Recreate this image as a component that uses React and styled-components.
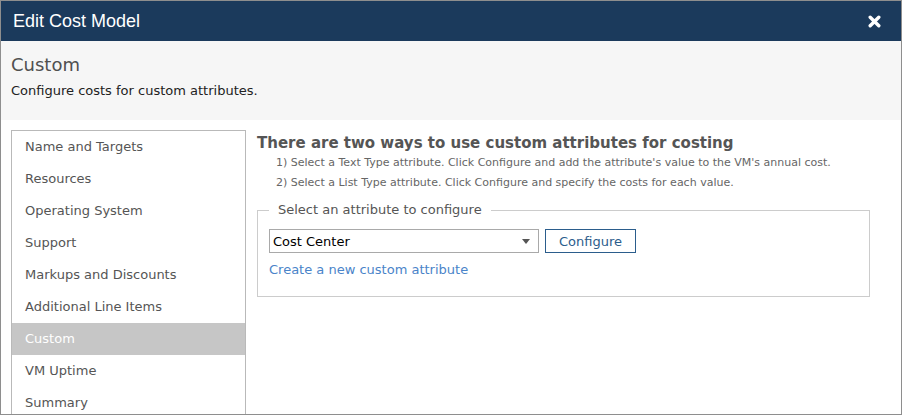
import React from "react";
import styled, { createGlobalStyle } from "styled-components";

const Global = createGlobalStyle`
  html, body { margin: 0; padding: 0; background: #fff; }
  * { box-sizing: border-box; }
`;

const Window = styled.div`
  width: 902px;
  height: 415px;
  border: 1px solid #8e8e8e;
  overflow: hidden;
  display: flex;
  flex-direction: column;
  font-family: "DejaVu Sans", Verdana, sans-serif;
  background: #fff;
`;

const TitleBar = styled.div`
  height: 40px;
  flex: none;
  background: #1b3a5c;
  display: flex;
  align-items: center;
  justify-content: space-between;
  padding: 0 20px 0 12px;
`;

const Title = styled.div`
  font-family: "Liberation Sans", Arial, sans-serif;
  font-size: 18px;
  color: #fff;
`;

const CloseButton = styled.div`
  width: 13px;
  height: 13px;
  display: flex;
  cursor: pointer;
`;

const SubHeader = styled.div`
  height: 79px;
  flex: none;
  background: #f6f6f6;
  padding: 12px 10px 0 10px;
`;

const SubTitle = styled.div`
  font-size: 18px;
  color: #505050;
  line-height: 24px;
`;

const SubText = styled.div`
  font-size: 13px;
  color: #222;
  margin-top: 6px;
  line-height: 16px;
`;

const Body = styled.div`
  flex: 1;
  display: flex;
  padding: 10px 31px 0 10px;
  gap: 11px;
  min-height: 0;
`;

const Sidebar = styled.div`
  width: 235px;
  flex: none;
  border: 1px solid #b9b9b9;
  align-self: flex-start;
`;

const NavItem = styled.div`
  height: 32px;
  display: flex;
  align-items: center;
  padding: 0 0 2px 13px;
  font-size: 13px;
  color: ${(p) => (p.$active ? "#fff" : "#555")};
  background: ${(p) => (p.$active ? "#c6c6c6" : "transparent")};
`;

const Content = styled.div`
  flex: 1;
  display: flex;
  flex-direction: column;
  padding-top: 4px;
`;

const Heading = styled.div`
  font-size: 15px;
  font-weight: bold;
  color: #555;
  line-height: 18px;
`;

const Steps = styled.div`
  padding-left: 19px;
  margin-top: 1px;
`;

const Step = styled.div`
  font-size: 11px;
  color: #666;
  line-height: 20px;
`;

const Fieldset = styled.fieldset`
  margin: 9px 0 0 0;
  border: 1px solid #cccccc;
  padding: 0 11px 18px 11px;
`;

const Legend = styled.legend`
  font-size: 13px;
  color: #555;
  padding: 0 9px;
  line-height: 16px;
`;

const Row = styled.div`
  display: flex;
  gap: 6px;
  margin-top: 11px;
`;

const SelectBox = styled.div`
  width: 270px;
  height: 24px;
  border: 1px solid #a9a9a9;
  display: flex;
  align-items: center;
  justify-content: space-between;
  padding: 0 8px 0 3px;
  font-size: 13px;
  color: #000;
`;

const Caret = styled.span`
  width: 0;
  height: 0;
  border-left: 4px solid transparent;
  border-right: 4px solid transparent;
  border-top: 5px solid #555;
`;

const Button = styled.button`
  width: 91px;
  height: 24px;
  border: 1px solid #2b5d8c;
  background: #fff;
  color: #2b5d8c;
  font-family: "DejaVu Sans", Verdana, sans-serif;
  font-size: 13px;
  padding: 0;
`;

const Link = styled.a`
  display: block;
  margin-top: 9px;
  font-size: 13px;
  color: #4a84c9;
  line-height: 16px;
  text-decoration: none;
  cursor: pointer;
`;

const items = [
  "Name and Targets",
  "Resources",
  "Operating System",
  "Support",
  "Markups and Discounts",
  "Additional Line Items",
  "Custom",
  "VM Uptime",
  "Summary",
];

export default function App() {
  return (
    <>
      <Global />
      <Window>
        <TitleBar>
          <Title>Edit Cost Model</Title>
          <CloseButton>
            <svg width="13" height="13" viewBox="0 0 13 13">
              <path
                d="M2.2 2.2 L10.8 10.8 M10.8 2.2 L2.2 10.8"
                stroke="#fff"
                strokeWidth="3.4"
                strokeLinecap="round"
              />
            </svg>
          </CloseButton>
        </TitleBar>
        <SubHeader>
          <SubTitle>Custom</SubTitle>
          <SubText>Configure costs for custom attributes.</SubText>
        </SubHeader>
        <Body>
          <Sidebar>
            {items.map((it) => (
              <NavItem key={it} $active={it === "Custom"}>
                {it}
              </NavItem>
            ))}
          </Sidebar>
          <Content>
            <Heading>There are two ways to use custom attributes for costing</Heading>
            <Steps>
              <Step>
                1) Select a Text Type attribute. Click Configure and add the attribute's value to the VM's annual cost.
              </Step>
              <Step>
                2) Select a List Type attribute. Click Configure and specify the costs for each value.
              </Step>
            </Steps>
            <Fieldset>
              <Legend>Select an attribute to configure</Legend>
              <Row>
                <SelectBox>
                  <span>Cost Center</span>
                  <Caret />
                </SelectBox>
                <Button>Configure</Button>
              </Row>
              <Link>Create a new custom attribute</Link>
            </Fieldset>
          </Content>
        </Body>
      </Window>
    </>
  );
}
